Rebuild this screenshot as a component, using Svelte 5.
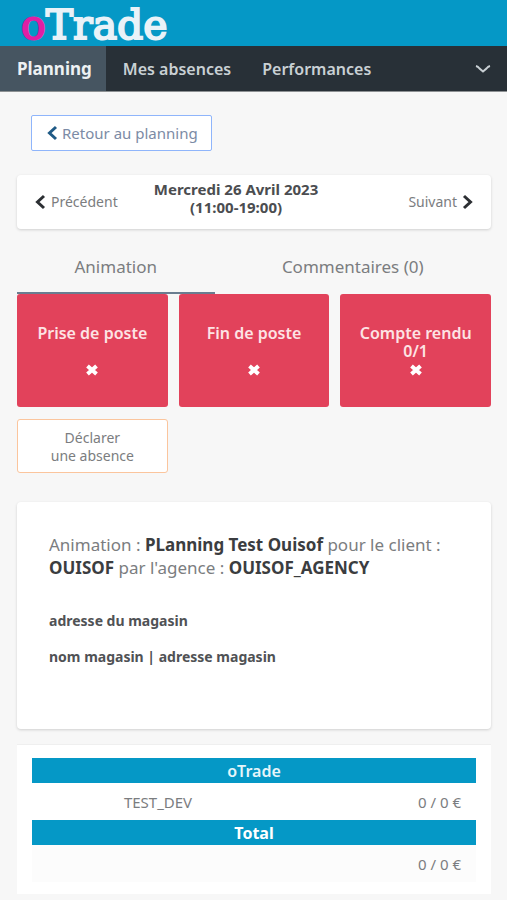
<script>
	const links = ['Planning', 'Mes absences', 'Performances'];
	const tasks = [
		{ label: 'Prise de poste' },
		{ label: 'Fin de poste' },
		{ label: 'Compte rendu', count: '0/1' }
	];

	let page = $state('Planning');
	let tab = $state('animation');
</script>

<svelte:head>
	<title>oTrade</title>
</svelte:head>

<header>
	<a class="logo" href="#accueil"><span>o</span>Trade</a>
</header>

<nav>
	{#each links as link}
		<a href="#{link}" class:active={page === link} onclick={() => (page = link)}>{link}</a>
	{/each}
	<button class="more" aria-label="Plus">
		<svg width="18" height="12" viewBox="0 0 18 12"><path d="M2 3 Q4 3.5 5.5 5.5 L9 8.5 L12.500 5.5 Q14 3.500 16 3" /></svg>
	</button>
</nav>

<main>
	<a class="back" href="#planning">
		<svg class="chevron" width="12" height="16" viewBox="0 0 12 16"><path d="M10 2 L3.500 8 L10 14" /></svg>
		Retour au planning
	</a>

	<section class="card day">
		<a href="#precedent">
			<svg class="chevron" width="12" height="16" viewBox="0 0 12 16"><path d="M10 2 L3.500 8 L10 14" /></svg>
			Précédent
		</a>
		<h1>Mercredi 26 Avril 2023<br />(11:00-19:00)</h1>
		<a class="next" href="#suivant">
			Suivant
			<svg class="chevron" width="12" height="16" viewBox="0 0 12 16"><path d="M2 2 L8.500 8 L2 14" /></svg>
		</a>
	</section>

	<div class="tabs">
		<button class:active={tab === 'animation'} onclick={() => (tab = 'animation')}>Animation</button>
		<button class:active={tab === 'comments'} onclick={() => (tab = 'comments')}>Commentaires (0)</button>
	</div>

	<div class="tasks">
		{#each tasks as task}
			<button class="task">
				<span class="label">{task.label}{#if task.count}<br />{task.count}{/if}</span>
				<svg width="14" height="12" viewBox="0 0 14 12"><path d="M2.500 2 L11.500 10 M11.500 2 L2.500 10" /></svg>
			</button>
		{/each}
		<button class="absence">Déclarer<br />une absence</button>
	</div>

	<section class="card details">
		<p>
			Animation : <b>PLanning Test Ouisof</b> pour le client : <b>OUISOF</b> par l'agence : <b>OUISOF_AGENCY</b>
		</p>
		<h2>adresse du magasin</h2>
		<h2>nom magasin | adresse magasin</h2>
	</section>

	<section class="totals">
		<table>
			<tbody>
				<tr><th colspan="2">oTrade</th></tr>
				<tr><td class="name">TEST_DEV</td><td class="amount">0 / 0 €</td></tr>
				<tr><th class="strong" colspan="2">Total</th></tr>
				<tr class="sum"><td></td><td class="amount">0 / 0 €</td></tr>
			</tbody>
		</table>
	</section>
</main>

<style>
	:global(body) {
		margin: 0;
		background: #f7f7f7;
		color: #7b7d80;
		font-family: 'Noto Sans', 'Open Sans', sans-serif;
		font-size: 14px;
		line-height: 18px;
	}

	a {
		color: inherit;
		text-decoration: none;
	}

	button {
		padding: 0;
		border: 0;
		background: none;
		color: inherit;
		font: inherit;
		cursor: pointer;
	}

	svg {
		fill: none;
		stroke: currentColor;
	}

	header {
		height: 46px;
		padding-left: 21px;
		background: #0598c6;
	}

	.logo {
		color: #e9f2f8;
		font-family: 'DejaVu Serif', serif;
		font-size: 41px;
		line-height: 50px;
		-webkit-text-stroke: 2px currentColor;
	}

	.logo span {
		color: #e01fa4;
	}

	nav {
		display: flex;
		height: 45px;
		background: #283037;
		border-bottom: 1px solid #8d9193;
		color: #c9d0d4;
		font-size: 16px;
		font-weight: 600;
		line-height: 46px;
	}

	nav a {
		padding: 0 14px 0 17px;
	}

	nav a.active {
		background: #465561;
		color: #edf1f3;
		font-size: 17px;
		font-weight: 700;
	}

	.more {
		display: flex;
		align-items: center;
		margin-left: auto;
		padding: 0 15px;
	}

	.more svg {
		stroke-width: 2;
	}

	main {
		padding: 23px 16px 6px 17px;
	}

	.chevron {
		flex: none;
		color: #2c2f33;
		stroke-width: 3;
	}

	.back {
		display: inline-flex;
		align-items: center;
		gap: 4px;
		margin-left: 14px;
		padding: 8px 13px 8px 14px;
		border: 1px solid #8fb5fb;
		border-radius: 2px;
		background: #fff;
		color: #7c8ba5;
		font-size: 15px;
	}

	.back .chevron {
		color: #1f5a86;
	}

	.card {
		border-radius: 4px;
		background: #fff;
		box-shadow: 0 1px 3px rgba(0, 0, 0, 0.16);
	}

	.day {
		display: grid;
		grid-template-columns: auto 1fr auto;
		align-items: center;
		margin-top: 24px;
		padding: 5px 17px 13px;
	}

	.day a {
		display: flex;
		align-items: center;
		gap: 5px;
		padding-top: 8px;
	}

	.day .next {
		justify-content: flex-end;
	}

	h1 {
		margin: 0;
		padding-right: 54px;
		color: #4b4d50;
		font-size: 15px;
		font-weight: 700;
		text-align: center;
	}

	.tabs {
		display: grid;
		grid-template-columns: 5fr 7fr;
		margin-top: 12px;
		font-size: 17px;
	}

	.tabs button {
		height: 53px;
		border-bottom: 2px solid transparent;
	}

	.tabs .active {
		border-color: #6a7d90;
	}

	.tasks {
		display: grid;
		grid-template-columns: repeat(3, 1fr);
		gap: 12px 11px;
	}

	.task {
		display: flex;
		flex-direction: column;
		align-items: center;
		height: 113px;
		padding-top: 30px;
		border-radius: 3px;
		background: #e2425b;
		color: #fde3e4;
		font-size: 16px;
		font-weight: 600;
	}

	.label {
		min-height: 36px;
	}

	.task svg {
		margin-top: 4px;
		color: #fff;
		stroke-width: 4;
	}

	.absence {
		height: 54px;
		padding-top: 2px;
		border: 1px solid #fbc59d;
		border-radius: 3px;
		background: #fff;
	}

	.details {
		margin-top: 29px;
		padding: 31px 32px 63px;
	}

	.details p {
		margin: 0 0 33px;
		font-size: 17px;
		line-height: 23px;
	}

	.details b {
		color: #3b3d40;
	}

	h2 {
		margin: 0 0 18px;
		color: #505255;
		font-size: 14px;
		font-weight: 700;
	}

	h2:last-child {
		margin: 0;
	}

	.totals {
		margin-top: 15px;
		padding: 13px 15px 12px;
		border-top: 1px solid #efefef;
		background: #fff;
	}

	table {
		width: 100%;
		border-collapse: collapse;
		font-size: 15px;
		table-layout: fixed;
	}

	th {
		height: 25px;
		padding: 0;
		background: #0598c6;
		color: #e6f5fa;
		font-size: 16px;
		font-weight: 600;
	}

	.strong {
		color: #fff;
		font-weight: 700;
	}

	td {
		height: 37px;
		padding: 0 15px;
	}

	.name {
		padding-left: 45px;
		text-align: center;
	}

	.amount {
		text-align: right;
	}

	.sum {
		background: #fcfcfc;
	}
</style>
